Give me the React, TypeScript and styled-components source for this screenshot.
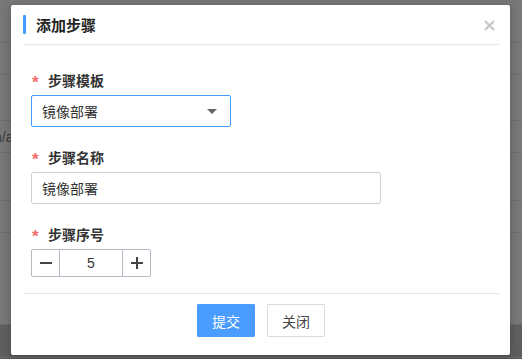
import React, { FC } from "react";
import styled, { createGlobalStyle } from "styled-components";

const GlobalStyle = createGlobalStyle`
  html, body {
    margin: 0;
    padding: 0;
    width: 522px;
    height: 359px;
    overflow: hidden;
    font-family: "Liberation Sans", "Noto Sans CJK SC", sans-serif;
  }
`;

const Page = styled.div`
  position: relative;
  width: 522px;
  height: 359px;
  background: #787878;
  display: flex;
  flex-direction: column;
  overflow: hidden;
`;

const BgRow = styled.div<{ $h: number; $shade?: string }>`
  height: ${(p) => p.$h}px;
  flex: none;
  border-bottom: 1px solid #6c6c6c;
  background: ${(p) => p.$shade || "transparent"};
  display: flex;
  align-items: center;
  color: #3a3a3a;
  font-size: 14px;
`;

const BgText = styled.span`
  margin-left: -6px;
`;

const Modal = styled.div`
  position: absolute;
  left: 11px;
  top: 5px;
  width: 499px;
  height: 350px;
  background: #fff;
  border-radius: 2px;
  box-shadow: 0 2px 10px rgba(0, 0, 0, 0.25);
  padding: 0 11px 0 12px;
  box-sizing: border-box;
  display: flex;
  flex-direction: column;
  font-family: "Noto Sans CJK SC", "Liberation Sans", sans-serif;
`;

const Header = styled.div`
  height: 39px;
  flex: none;
  border-bottom: 1px solid #e6e6e6;
  display: flex;
  align-items: center;
  position: relative;
`;

const TitleBar = styled.span`
  width: 3px;
  height: 19px;
  background: #409eff;
  border-radius: 1px;
  margin: 0 10px 0 0;
`;

const Title = styled.h3`
  margin: 0;
  font-size: 15px;
  font-weight: 600;
  color: #222;
  line-height: 20px;
`;

const CloseBtn = styled.span`
  position: absolute;
  right: 4px;
  top: 15px;
  width: 11px;
  height: 11px;
  display: block;
  line-height: 0;

  svg {
    display: block;
  }
`;

const Body = styled.div`
  flex: none;
  padding: 25px 0 16px 8px;
  border-bottom: 1px solid #e6e6e6;
  display: flex;
  flex-direction: column;
  gap: 20px;
`;

const FormItem = styled.div`
  display: flex;
  flex-direction: column;
  gap: 5px;
`;

const Label = styled.label`
  display: flex;
  align-items: center;
  height: 20px;
  font-size: 14px;
  font-weight: bold;
  color: #333;
`;

const Star = styled.span`
  color: #f56c6c;
  font-family: "Liberation Sans", sans-serif;
  font-weight: bold;
  font-size: 17px;
  width: 16px;
  margin-left: 1px;
  line-height: 14px;
  padding-top: 5px;
`;

const SelectBox = styled.div`
  width: 200px;
  height: 32px;
  box-sizing: border-box;
  border: 1px solid #409eff;
  border-radius: 2px;
  padding: 0 13px 0 10px;
  display: flex;
  align-items: center;
  justify-content: space-between;
  font-size: 14px;
  color: #333;
`;

const Caret = styled.span`
  width: 0;
  height: 0;
  border-left: 5px solid transparent;
  border-right: 5px solid transparent;
  border-top: 5px solid #666;
`;

const TextInput = styled.input`
  width: 350px;
  height: 32px;
  box-sizing: border-box;
  border: 1px solid #cfcfcf;
  border-radius: 2px;
  padding: 0 10px;
  font-family: "Noto Sans CJK SC", "Liberation Sans", sans-serif;
  font-size: 14px;
  color: #333;
  outline: none;
`;

const Stepper = styled.div`
  width: 120px;
  height: 28px;
  box-sizing: border-box;
  border: 1px solid #b8b8c4;
  border-radius: 2px;
  display: flex;
`;

const StepBtn = styled.span<{ $side: "left" | "right" }>`
  width: 27px;
  flex: none;
  display: flex;
  align-items: center;
  justify-content: center;
  ${(p) => (p.$side === "left" ? "border-right" : "border-left")}: 1px solid #b8b8c4;
`;

const StepValue = styled.span`
  flex: 1;
  display: flex;
  align-items: center;
  justify-content: center;
  font-family: "Liberation Sans", sans-serif;
  font-size: 14px;
  color: #333;
`;

const Footer = styled.div`
  flex: none;
  padding-top: 10px;
  display: flex;
  justify-content: center;
  gap: 12px;
`;

const Button = styled.button<{ $primary?: boolean }>`
  width: 58px;
  height: 33px;
  box-sizing: border-box;
  border: 1px solid ${(p) => (p.$primary ? "#4a9cff" : "#dcdcdc")};
  background: ${(p) => (p.$primary ? "#4a9cff" : "#fff")};
  color: ${(p) => (p.$primary ? "#fff" : "#444")};
  border-radius: 1px;
  font-family: "Noto Sans CJK SC", "Liberation Sans", sans-serif;
  font-size: 14px;
  padding: 0;
`;

const Minus = () => (
  <svg width="12" height="12" viewBox="0 0 12 12">
    <path d="M0 6H12" stroke="#444" strokeWidth="2" />
  </svg>
);

const Plus = () => (
  <svg width="12" height="12" viewBox="0 0 12 12">
    <path d="M0 6H12M6 0V12" stroke="#444" strokeWidth="2" />
  </svg>
);

const App: FC = () => {
  return (
    <>
      <GlobalStyle />
      <Page>
        <BgRow $h={42} />
        <BgRow $h={31} />
        <BgRow $h={45} />
        <BgRow $h={31}>
          <BgText>n/a</BgText>
        </BgRow>
        <BgRow $h={47} />
        <BgRow $h={31} />
        <BgRow $h={91} />
        <BgRow $h={32} $shade="#5f5f5f" />
        <BgRow $h={9} $shade="#555" />

        <Modal>
          <Header>
            <TitleBar />
            <Title>添加步骤</Title>
            <CloseBtn>
              <svg width="11" height="11" viewBox="0 0 11 11">
                <path d="M1 1L10 10M10 1L1 10" stroke="#c8c8c8" strokeWidth="2.4" />
              </svg>
            </CloseBtn>
          </Header>
          <Body>
            <FormItem>
              <Label>
                <Star>*</Star>步骤模板
              </Label>
              <SelectBox>
                镜像部署
                <Caret />
              </SelectBox>
            </FormItem>
            <FormItem>
              <Label>
                <Star>*</Star>步骤名称
              </Label>
              <TextInput defaultValue="镜像部署" />
            </FormItem>
            <FormItem>
              <Label>
                <Star>*</Star>步骤序号
              </Label>
              <Stepper>
                <StepBtn $side="left">
                  <Minus />
                </StepBtn>
                <StepValue>5</StepValue>
                <StepBtn $side="right">
                  <Plus />
                </StepBtn>
              </Stepper>
            </FormItem>
          </Body>
          <Footer>
            <Button $primary>提交</Button>
            <Button>关闭</Button>
          </Footer>
        </Modal>
      </Page>
    </>
  );
};

export default App;
